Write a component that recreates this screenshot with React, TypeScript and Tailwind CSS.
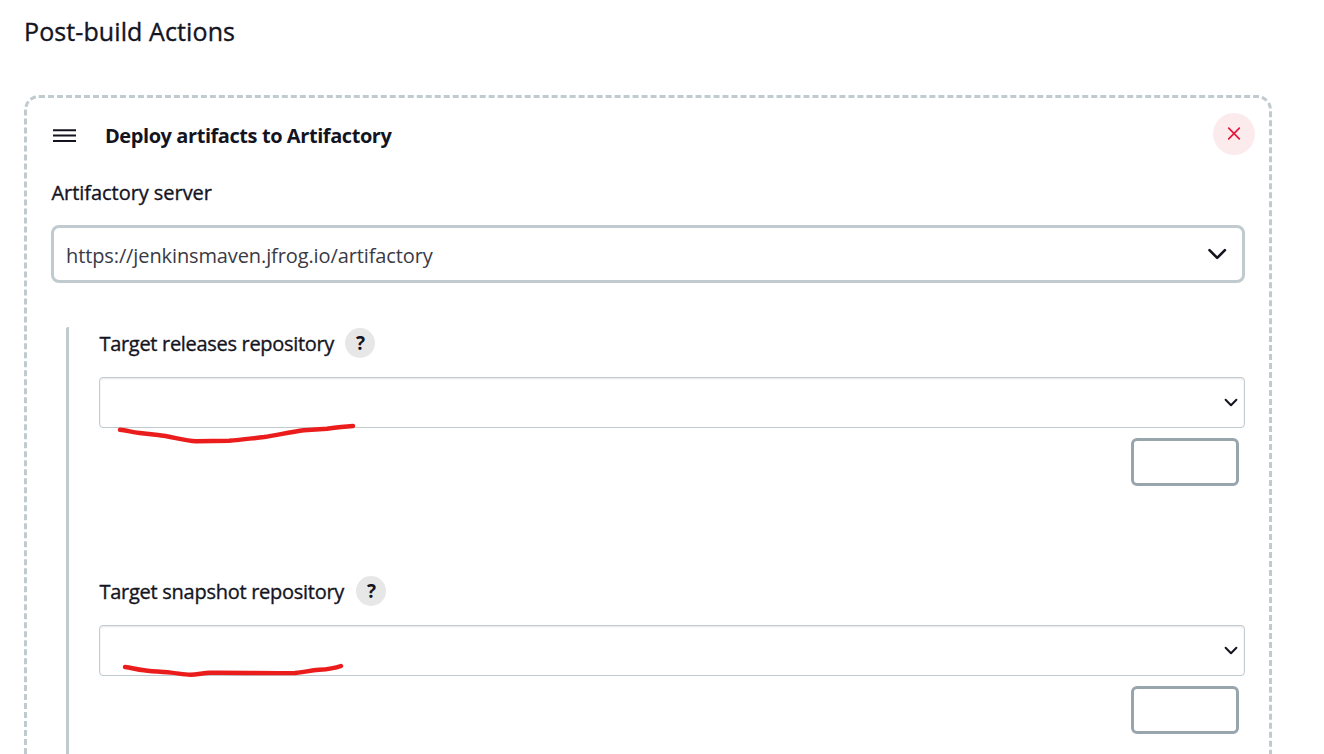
type RepositoryFieldProps = {
  label: string;
  mark: string;
  labelClass: string;
};

function Chevron({ className, d, width }: { className: string; d: string; width: number }) {
  return (
    <svg className={className} fill="none" stroke="#14141f" strokeWidth={width} strokeLinecap="round" strokeLinejoin="round">
      <path d={d} />
    </svg>
  );
}

function RepositoryField({ label, mark, labelClass }: RepositoryFieldProps) {
  return (
    <div className="relative h-[248px]">
      <div className="flex h-[30px] items-center">
        <label className={`h-[30px] shrink-0 pl-[0.5px] text-[20px] leading-[31px] whitespace-nowrap ${labelClass}`}>{label}</label>
        <button className="flex size-[30px] items-center justify-center rounded-full bg-[#e7e7e7]">
          <span className="pl-px font-['Open_Sans',sans-serif] text-[19px] leading-[30px] font-bold">?</span>
        </button>
      </div>
      <div className="mt-[19px] flex h-[51px] items-center justify-end rounded-[4px] border border-[#c1cacf] pr-[5px] shadow-[inset_0_1px_2px_rgba(0,0,0,0.10)]">
        <Chevron className="h-4 w-4" d="M2.6 4.8 L8 10.2 L13.4 4.8" width={2} />
      </div>
      <div className="mt-[10px] flex justify-end pr-[6px]">
        <button className="h-[48px] w-[108px] rounded-[6px] border-[3px] border-[#98a5ad]" />
      </div>
      <svg className="pointer-events-none absolute top-[90px] left-0 h-[40px] w-[280px] overflow-visible" fill="none" stroke="#ea1c1c" strokeWidth="4.4" strokeLinecap="round" strokeLinejoin="round">
        <path d={mark} />
      </svg>
    </div>
  );
}

export default function App() {
  return (
    <main className="h-[754px] overflow-hidden bg-white pl-6 font-['Open_Sans','Noto_Sans',sans-serif] text-[#14141f]">
      <h2 className="h-[95px] pt-[11px] text-[25px] leading-[40px] tracking-[0.1px] [-webkit-text-stroke:0.35px_#14141f]">Post-build Actions</h2>
      <section className="h-[900px] w-[1248px] rounded-[15px] border-[3px] border-dashed border-[#c1cacf] pr-[24px] pl-[24px]">
        <header className="-mr-[10px] flex h-[72px] items-start pt-[15px]">
          <svg className="mt-[10px] ml-[2px] h-[24px] w-[24px]" stroke="#14141f" strokeWidth="2">
            <path d="M0 7.2H23 M0 12.5H23 M0 18H23" />
          </svg>
          <h3 className="ml-[28px] text-[20px] leading-[45px] font-bold tracking-[-0.43px]">Deploy artifacts to Artifactory</h3>
          <button className="ml-auto flex size-[42px] items-center justify-center rounded-full bg-[#fcebed]">
            <svg className="size-4" fill="none" stroke="#e6193c" strokeWidth="1.7" strokeLinecap="round">
              <path d="M2.7 2.2L13.3 12.8M13.3 2.2L2.7 12.8" />
            </svg>
          </button>
        </header>
        <label className="block h-[55px] pt-[7px] pl-[0.5px] text-[20px] leading-[31px] tracking-[-0.05px] [-webkit-text-stroke:0.35px_#14141f]">Artifactory server</label>
        <div className="flex h-[58px] items-center justify-between rounded-[8px] border-[3px] border-[#c1cacf] pr-[13px] pl-[12px]">
          <span className="pt-[3px] text-[20px] leading-[30px] tracking-[-0.11px] text-[#3a3a44]">https://jenkinsmaven.jfrog.io/artifactory</span>
          <Chevron className="h-6 w-6" d="M4.5 8.2 L12.2 15.9 L19.9 8.2" width={2.6} />
        </div>
        <div className="mt-[44px] ml-[15px] h-[600px] rounded-t-[2px] border-l-[3px] border-[#c1cacf] pt-px pl-[30px]">
          <RepositoryField
            label="Target releases repository"
            labelClass="w-[246px] tracking-[-0.31px] [-webkit-text-stroke:0.35px_#14141f]"
            mark="M21 11.8 C28 12.6 35 14.5 43 15.3 L59 17 C72 18.3 86 23 97 23.2 L130 22.8 C142 22 153 20.3 165 19 C178 17 192 14 205 12.3 L228 10.7 C237 9.5 246 8.5 254 8"
          />
          <RepositoryField
            label="Target snapshot repository"
            labelClass="w-[257px] tracking-[-0.27px] [-webkit-text-stroke:0.35px_#14141f]"
            mark="M26 1 C33 2 38 3.6 45 4.3 C54 5.6 63 5.9 72 6.6 C79 7.3 85 8.6 91.5 8.8 C98 8.6 104 7.2 111 6.8 C140 6.6 168 7.4 196 7 C205 6.4 211 4.4 220 3.8 C229 3.3 235 2.6 242 0"
          />
        </div>
      </section>
    </main>
  );
}
